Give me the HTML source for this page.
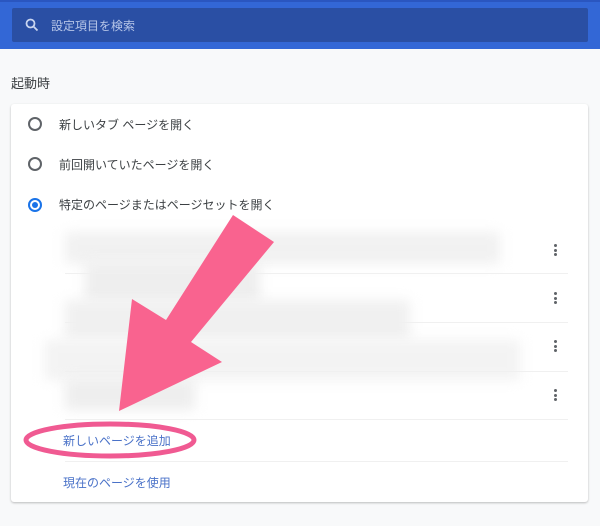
<!DOCTYPE html>
<html><head><meta charset="utf-8"><style>
*{margin:0;padding:0;box-sizing:border-box}
body{width:600px;height:526px;background:#f8f9fa;position:relative;overflow:hidden;font-family:"Liberation Sans","Noto Sans CJK JP",sans-serif;font-size:12px;color:#3c4043}
.hdr{position:absolute;left:0;top:0;width:600px;height:49px;background:#3367d6;border-top:2px solid #2a56c0}
.sb{position:absolute;left:12px;top:8px;width:576px;height:34px;background:#2a4fa4;border-radius:2px}
.sb span{position:absolute;left:39px;top:9px;color:#b7c6e8;font-size:12px}
.t{position:absolute}
.card{position:absolute;left:11px;top:104px;width:577px;height:398px;background:#fff;border-radius:3px;box-shadow:0 1px 2px rgba(0,0,0,.25)}
.r{position:absolute;width:14px;height:14px;border:2px solid #5f6368;border-radius:50%}
.sep{position:absolute;left:65px;width:503px;height:1px;background:#f0f0f0}
.dot{position:absolute;left:554px;width:3px;height:12px}
.dot i{display:block;width:3px;height:3px;background:#5f6368;border-radius:50%;margin-bottom:1.5px}
.blur{position:absolute;background:#f1f1f1;filter:blur(6px)}
.lk{color:#4a72c8}
</style></head><body>
<div class="hdr"></div>
<div class="sb"><svg style="position:absolute;left:13px;top:10px" width="14" height="14" viewBox="0 0 14 14"><circle cx="5.5" cy="5.5" r="4" fill="none" stroke="#c9d5f0" stroke-width="1.8"/><line x1="8.5" y1="8.5" x2="12.5" y2="12.5" stroke="#c9d5f0" stroke-width="1.8"/></svg><span>設定項目を検索</span></div>
<div class="t" style="left:11px;top:73px;font-size:13px">起動時</div>
<div class="card"></div>
<div class="r" style="left:28px;top:117px"></div>
<div class="t" style="left:59px;top:116px">新しいタブ ページを開く</div>
<div class="r" style="left:28px;top:157px"></div>
<div class="t" style="left:59px;top:156px">前回開いていたページを開く</div>
<div class="r" style="left:28px;top:198px;border-color:#1a73e8"><div style="position:absolute;left:2px;top:2px;width:6px;height:6px;border-radius:50%;background:#1a73e8"></div></div>
<div class="t" style="left:59px;top:196px">特定のページまたはページセットを開く</div>
<div class="blur" style="left:65px;top:232px;width:435px;height:32px"></div>
<div class="blur" style="left:85px;top:262px;width:175px;height:40px;background:#eeeeee"></div>
<div class="blur" style="left:65px;top:300px;width:345px;height:40px;background:#f0f0f0"></div>
<div class="blur" style="left:45px;top:340px;width:475px;height:40px;background:#f3f3f3"></div>
<div class="blur" style="left:65px;top:378px;width:130px;height:32px;background:#eeeeee"></div>
<div class="sep" style="top:273px"></div><div class="sep" style="top:322px"></div><div class="sep" style="top:371px"></div><div class="sep" style="top:419px"></div><div class="sep" style="top:461px"></div>
<div class="dot" style="top:244px"><i></i><i></i><i></i></div>
<div class="dot" style="top:292px"><i></i><i></i><i></i></div>
<div class="dot" style="top:340px"><i></i><i></i><i></i></div>
<div class="dot" style="top:389px"><i></i><i></i><i></i></div>
<div class="t lk" style="left:63px;top:432px">新しいページを追加</div>
<div class="t lk" style="left:63px;top:474px">現在のページを使用</div>
<svg style="position:absolute;left:0;top:0" width="600" height="526">
<polygon points="233,215 274,242 191,342 222,362 119,411 132,299 166,320" fill="#f9638f"/>
<ellipse cx="110" cy="440" rx="84" ry="16" fill="none" stroke="#f05a92" stroke-width="5"/>
</svg>
</body></html>
